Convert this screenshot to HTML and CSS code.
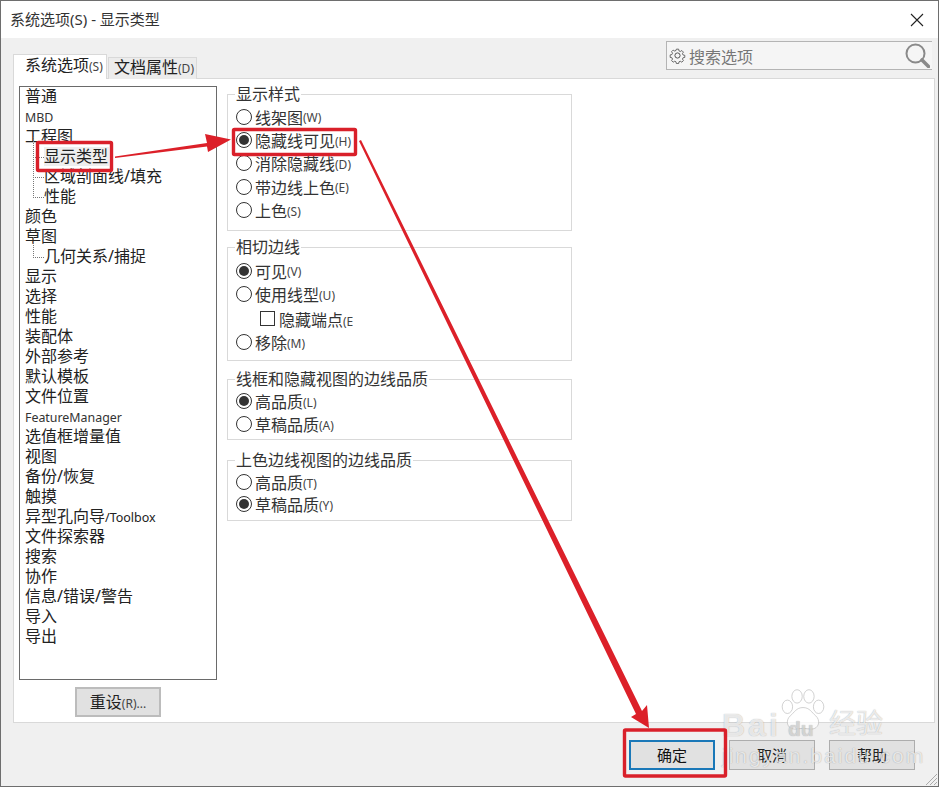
FILE: index.html
```html
<!DOCTYPE html>
<html lang="zh-CN">
<head>
<meta charset="utf-8">
<title>系统选项(S) - 显示类型</title>
<link rel="stylesheet" href="styles.css">
</head>
<body>
<div class="window">
  <header class="titlebar">
    <span class="title">系统选项(S) - 显示类型</span>
    <svg class="close" width="14" height="14" viewBox="0 0 14 14"><path d="M1 1L13 13M13 1L1 13" stroke="#222" stroke-width="1.1" fill="none"/></svg>
  </header>
  <div class="body">
    <div class="topbar">
      <div class="tabs">
        <div class="tab active">系统选项<span class="hk">(S)</span></div>
        <div class="tab">文档属性<span class="hk">(D)</span></div>
      </div>
      <div class="search">
        <svg width="17" height="17" viewBox="0 0 17 17" fill="none" stroke="#555" stroke-width="1"><circle cx="8.5" cy="8.5" r="2.6"/><path d="M7.2 1.2h2.6l.4 2 1.5.7 1.8-1.1 1.8 1.8-1.1 1.8.7 1.5 2 .4v2.4l-2 .4-.7 1.5 1.1 1.8-1.8 1.8-1.8-1.1-1.5.7-.4 2H7.2l-.4-2-1.5-.7-1.8 1.1-1.8-1.8 1.1-1.8-.7-1.5-2-.4V7.8l2-.4.7-1.5-1.1-1.8 1.8-1.8 1.8 1.1 1.5-.7z" transform="translate(1.1 1.1) scale(.87)"/></svg>
        <span class="search-text">搜索选项</span>
        <svg class="lens" width="25" height="25" viewBox="0 0 25 25" fill="none" stroke="#8a8a8a"><circle cx="10.5" cy="10.5" r="9" stroke-width="2"/><path d="M17 17L23.5 23.5" stroke-width="3.6" stroke-linecap="round"/></svg>
      </div>
    </div>
    <div class="panel">
      <div class="left">
        <ul class="tree">
          <li>普通</li>
          <li class="latin">MBD</li>
          <li>工程图</li>
          <li class="child first"><span class="selected">显示类型</span></li>
          <li class="child">区域剖面线/填充</li>
          <li class="child">性能</li>
          <li>颜色</li>
          <li>草图</li>
          <li class="child first">几何关系/捕捉</li>
          <li>显示</li>
          <li>选择</li>
          <li>性能</li>
          <li>装配体</li>
          <li>外部参考</li>
          <li>默认模板</li>
          <li>文件位置</li>
          <li class="latin">FeatureManager</li>
          <li>选值框增量值</li>
          <li>视图</li>
          <li>备份/恢复</li>
          <li>触摸</li>
          <li>异型孔向导<span class="latin-inline">/Toolbox</span></li>
          <li>文件探索器</li>
          <li>搜索</li>
          <li>协作</li>
          <li>信息/错误/警告</li>
          <li>导入</li>
          <li>导出</li>
        </ul>
        <button class="btn reset">重设<span class="hk">(R)...</span></button>
      </div>
      <div class="right">
        <fieldset class="group g1">
          <legend>显示样式</legend>
          <div class="row"><i class="radio"></i>线架图<span class="hk">(W)</span></div>
          <div class="row"><i class="radio on"></i>隐藏线可见<span class="hk">(H)</span></div>
          <div class="row"><i class="radio"></i>消除隐藏线<span class="hk">(D)</span></div>
          <div class="row"><i class="radio"></i>带边线上色<span class="hk">(E)</span></div>
          <div class="row"><i class="radio"></i>上色<span class="hk">(S)</span></div>
        </fieldset>
        <fieldset class="group g2">
          <legend>相切边线</legend>
          <div class="row"><i class="radio on"></i>可见<span class="hk">(V)</span></div>
          <div class="row"><i class="radio"></i>使用线型<span class="hk">(U)</span></div>
          <div class="row sub"><i class="check"></i><span class="clip">隐藏端点<span class="hk">(E)</span></span></div>
          <div class="row"><i class="radio"></i>移除<span class="hk">(M)</span></div>
        </fieldset>
        <fieldset class="group g3">
          <legend>线框和隐藏视图的边线品质</legend>
          <div class="row"><i class="radio on"></i>高品质<span class="hk">(L)</span></div>
          <div class="row"><i class="radio"></i>草稿品质<span class="hk">(A)</span></div>
        </fieldset>
        <fieldset class="group g4">
          <legend>上色边线视图的边线品质</legend>
          <div class="row"><i class="radio"></i>高品质<span class="hk">(T)</span></div>
          <div class="row"><i class="radio on"></i>草稿品质<span class="hk">(Y)</span></div>
        </fieldset>
      </div>
    </div>
    <footer class="footer">
      <button class="btn primary">确定</button>
      <button class="btn">取消</button>
      <button class="btn">帮助</button>
    </footer>
  </div>
  <svg class="grip" width="14" height="14" viewBox="0 0 14 14" stroke="#aaa" fill="none"><path d="M13 2L2 13M13 6L6 13M13 10L10 13"/></svg>
  <div class="watermark">
    <svg class="paw" width="52" height="50" viewBox="0 0 70 62" fill="#fff" fill-opacity=".72" stroke="#bdbdbd" stroke-opacity=".7" stroke-width="1.300"><ellipse cx="14" cy="24" rx="7" ry="9"/><ellipse cx="27" cy="10" rx="7" ry="9"/><ellipse cx="43" cy="10" rx="7" ry="9"/><ellipse cx="56" cy="24" rx="7" ry="9"/><path d="M35 25c9 0 12 7 17 11 7 6 5 18-6 18-4 0-7-1-11-1s-7 1-11 1c-11 0-13-12-6-18 5-4 8-11 17-11z"/></svg>
    <span class="wm-bai">Bai</span><span class="wm-du">du</span><span class="wm-jy">经验</span>
    <span class="wm-url">jingyan.baidu.com</span>
  </div>
  <svg class="marks" width="939" height="787" viewBox="0 0 939 787">
    <g fill="#dc2029">
      <path d="M115 156.500L207 143L205 134L231 139.500L208 152L207 146.500L115 158z"/>
      <path d="M359 141L361 140L642 711L647 705L649 728L631 717L636 714z"/>
    </g>
    <g fill="none" stroke="#d9202a" stroke-width="3.400">
      <rect x="37.500" y="142.500" width="74" height="28" rx="1"/>
      <rect x="233.500" y="129.500" width="122" height="25" rx="1"/>
      <rect x="624.500" y="730" width="101" height="46" rx="1"/>
    </g>
  </svg>
</div>
</body>
</html>
```
FILE: styles.css
```css
* { box-sizing: border-box; }
html, body { margin: 0; padding: 0; }
body {
  width: 939px;
  height: 787px;
  overflow: hidden;
  font-family: "Noto Sans", "Noto Sans CJK SC", sans-serif;
  color: #222;
}
.window {
  position: relative;
  width: 939px;
  height: 787px;
  border: 1px solid #6e6e6e;
  display: flex;
  flex-direction: column;
  background: #f0f0f0;
}
.titlebar {
  height: 37px;
  flex: none;
  background: #fff;
  display: flex;
  align-items: center;
  justify-content: space-between;
  padding: 0 14px 2px 9px;
}
.title { font-size: 15px; line-height: 20px; color: #333; }
.close { display: block; margin-top: 3px; }
.body { flex: 1; display: flex; flex-direction: column; min-height: 0; }
.topbar {
  height: 40px;
  flex: none;
  display: flex;
  justify-content: space-between;
  align-items: flex-end;
  padding: 0 6px 0 12px;
}
.tabs { display: flex; align-items: flex-end; position: relative; top: 1px; }
.tab {
  height: 22px;
  width: 89px;
  padding-left: 5px;
  margin-left: 1px;
  font-size: 16px;
  line-height: 18px;
  white-space: nowrap;
  background: #ececec;
  border: 1px solid #d9d9d9;
  border-bottom: none;
}
.tab.active {
  height: 25px;
  width: 94px;
  margin-left: 0;
  padding-left: 11px;
  line-height: 21px;
  background: #fff;
}
.hk { font-size: 12px; color: #444; }
.search {
  width: 266px;
  height: 29px;
  margin-bottom: 8px;
  display: flex;
  align-items: center;
  padding: 0 2px 0 2px;
  background: #f5f5f5;
  border: 1px solid #b4b4b4;
  border-width: 1px 0 1px 1px;
}
.search-text { font-size: 16px; color: #777; margin-left: 3px; flex: 1; }
.lens { display: block; }
.panel {
  height: 645px;
  flex: none;
  margin: 0 3px 0 12px;
  background: #fff;
  border: 1px solid #d9d9d9;
  display: flex;
  padding: 7px 0 0 5px;
}
.left { width: 198px; flex: none; display: flex; flex-direction: column; align-items: center; }
.tree {
  list-style: none;
  margin: 0;
  padding: 0;
  width: 198px;
  height: 594px;
  border: 1px solid #6a6a6a;
  background: #fff;
}
.tree li {
  position: relative;
  height: 20px;
  line-height: 19px;
  padding-left: 5px;
  font-size: 16px;
  white-space: nowrap;
  color: #222;
}
.tree .latin { font-size: 12.400px; line-height: 21px; color: #333; }
.latin-inline { font-size: 12.500px; }
.tree .child { padding-left: 24px; }
.tree .child::before {
  content: "";
  position: absolute;
  left: 13px;
  top: -10px;
  width: 10px;
  height: 20px;
  border-left: 1px dotted #777;
  border-bottom: 1px dotted #777;
}
.selected { display: inline-block; background: #eee; padding: 0 1px 0 0; }
.btn {
  width: 86px;
  height: 30px;
  padding: 0;
  font-family: inherit;
  font-size: 15px;
  line-height: 26px;
  color: #222;
  background: #e1e1e1;
  border: 1px solid #adadad;
  border-radius: 0;
}
.reset { margin-top: 7px; font-size: 16px; border-width: 2px; border-color: #bcbcbc; }
.right { width: 345px; flex: none; margin: -2px 0 0 10px; display: flex; flex-direction: column; }
.group {
  margin: 0;
  min-width: 0;
  border: 1px solid #d9d9d9;
  padding: 1px 0 0 8px;
}
.group legend {
  padding: 0 1px;
  margin-left: -1px;
  font-size: 16px;
  line-height: 20px;
  color: #333;
}
.g1 { height: 147px; }
.g2 { height: 124px; margin-top: 6px; padding-top: 2px; }
.g3 { height: 71px; margin-top: 8px; }
.g4 { height: 71px; margin-top: 10px; }
.row {
  height: 23.400px;
  display: flex;
  align-items: center;
  font-size: 16px;
  color: #333;
  white-space: nowrap;
}
.g3 .row { height: 22.700px; }
.g4 .row { height: 22.300px; }
.row .hk { margin-top: 2px; display: inline-block; }
.radio {
  position: relative;
  width: 16px;
  height: 16px;
  flex: none;
  margin-right: 3px;
  border: 1px solid #333;
  border-radius: 50%;
  background: #fff;
}
.radio.on::after {
  content: "";
  position: absolute;
  left: 2px;
  top: 2px;
  width: 10px;
  height: 10px;
  border-radius: 50%;
  background: #333;
}
.row.sub { padding-left: 24px; margin-top: 1.500px; }
.check {
  width: 15px;
  height: 15px;
  flex: none;
  margin-right: 4px;
  border: 1px solid #333;
  background: #fff;
}
.clip { display: inline-block; width: 74px; overflow: hidden; }
.footer {
  flex: 1;
  display: flex;
  justify-content: flex-end;
  align-items: flex-start;
  gap: 14px;
  padding: 17px 23px 0 0;
}
.btn.primary { border: 2px solid #1a78b8; line-height: 25px; color: #111; }
.grip { position: absolute; right: 0; bottom: 0; }
.watermark {
  position: absolute;
  left: 720px;
  top: 684px;
  width: 200px;
  height: 90px;
  color: rgba(255, 255, 255, .75);
  text-shadow: 0 0 1px rgba(0, 0, 0, .35);
  pointer-events: none;
}
.paw { position: absolute; left: 56px; top: 2px; }
.wm-bai, .wm-du, .wm-jy, .wm-url { position: absolute; line-height: 1; white-space: nowrap; }
.wm-bai { left: 1px; top: 24px; font-size: 32px; letter-spacing: 3px; font-family: "Liberation Sans", sans-serif; font-weight: 700; }
.wm-du { left: 67px; top: 33px; font-size: 21px; font-weight: 700; font-family: "Liberation Sans", sans-serif; color: rgba(225, 225, 225, .8); }
.wm-jy { left: 108px; top: 23px; font-size: 27px; font-family: "Noto Sans CJK SC", sans-serif; }
.wm-url { left: 1px; top: 60px; font-size: 21px; letter-spacing: 2px; font-family: "Liberation Sans", sans-serif; }
.marks { position: absolute; left: -1px; top: -1px; pointer-events: none; }
```
